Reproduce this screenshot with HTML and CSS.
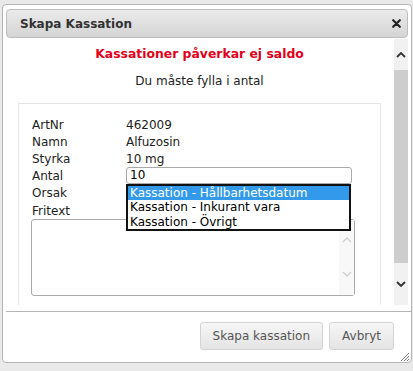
FILE: index.html
```html
<!DOCTYPE html>
<html lang="sv">
<head>
    <meta charset="UTF-8">
    <meta name="viewport" content="width=device-width, initial-scale=1.0">
    <title>Skapa Kassation</title>
    <link rel="stylesheet" href="styles.css">
</head>
<body>
    <div class="dialog">
        <div class="titlebar">
            <span class="title">Skapa Kassation</span>
            <svg class="close" width="9" height="9" viewBox="0 0 9 9">
                <path d="M1.2 1.2 L7.8 7.8 M7.8 1.2 L1.2 7.8" stroke="#222" stroke-width="2.2" stroke-linecap="round"/>
            </svg>
        </div>
        <div class="content">
            <div class="main">
                <p class="warning">Kassationer påverkar ej saldo</p>
                <p class="notice">Du måste fylla i antal</p>
                <div class="box">
                    <div class="form">
                        <span>ArtNr</span><span>462009</span>
                        <span>Namn</span><span>Alfuzosin</span>
                        <span>Styrka</span><span>10 mg</span>
                        <span>Antal</span><span class="input">10</span>
                        <span>Orsak</span>
                        <span class="select">
                            <span class="list">
                                <span class="option selected">Kassation - Hållbarhetsdatum</span>
                                <span class="option">Kassation - Inkurant vara</span>
                                <span class="option">Kassation - Övrigt</span>
                            </span>
                        </span>
                        <span>Fritext</span><span></span>
                    </div>
                    <div class="textarea">
                        <div class="ta-scroll">
                            <svg width="10" height="6" viewBox="0 0 10 6"><path d="M1 5 L5 1 L9 5" fill="none" stroke="#cfcfcf" stroke-width="1.3"/></svg>
                            <svg width="10" height="6" viewBox="0 0 10 6"><path d="M1 1 L5 5 L9 1" fill="none" stroke="#cfcfcf" stroke-width="1.3"/></svg>
                        </div>
                    </div>
                </div>
            </div>
            <div class="scrollbar">
                <div class="sb-btn up">
                    <svg width="10" height="6" viewBox="0 0 10 6"><path d="M1 5 L5 1 L9 5" fill="none" stroke="#333" stroke-width="1.8"/></svg>
                </div>
                <div class="sb-thumb"></div>
                <div class="sb-btn down">
                    <svg width="10" height="6" viewBox="0 0 10 6"><path d="M1 1 L5 5 L9 1" fill="none" stroke="#333" stroke-width="1.8"/></svg>
                </div>
            </div>
        </div>
        <div class="buttonpane">
            <button>Skapa kassation</button>
            <button>Avbryt</button>
            <svg class="grip" width="10" height="9" viewBox="0 0 10 9">
                <path d="M9 1 L1 9 M9 4 L4 9 M9 7 L7 9" stroke="#777" stroke-width="1"/>
            </svg>
        </div>
    </div>
</body>
</html>
```

FILE: styles.css
```css
* {
    margin: 0;
    padding: 0;
    box-sizing: border-box;
}
body {
    font-family: "DejaVu Sans", Verdana, sans-serif;
    font-size: 12px;
    color: #222;
    background: #e9e9e9;
    padding: 4px 0 0 2px;
    width: 413px;
    height: 371px;
    overflow: hidden;
}
.dialog {
    width: 410px;
    height: 359px;
    background: #fff;
    border: 1px solid #b5b5b5;
    border-radius: 4px;
    padding: 4px 3px 3px;
}
.titlebar {
    height: 29px;
    display: flex;
    align-items: center;
    justify-content: space-between;
    padding: 0 6px 0 13px;
    border: 1px solid #bdbdbd;
    border-radius: 4px;
    background: linear-gradient(#ebebeb, #d4d4d4);
}
.title {
    font-weight: bold;
    font-size: 12px;
    color: #333;
}
.content {
    display: flex;
    height: 266px;
    margin-top: 1px;
}
.main {
    flex: 1;
    overflow: hidden;
    padding: 0 13px 0 12px;
}
.warning {
    color: #e2001a;
    font-weight: bold;
    font-size: 12.4px;
    text-align: center;
    margin-top: 7px;
    line-height: 16px;
}
.notice {
    text-align: center;
    margin-top: 11px;
    line-height: 16px;
}
.box {
    border: 1px solid #e6e6e6;
    margin-top: 14px;
    padding: 12px 13px 20px;
}
.form {
    display: grid;
    grid-template-columns: 94px 226px;
    grid-template-rows: 17px 17px 17px 17px 18px 17px;
    align-items: center;
}
.input {
    display: block;
    height: 17px;
    border: 1px solid #aaa;
    border-radius: 3px;
    padding: 0 3px;
    line-height: 15px;
    color: #000;
}
.select {
    position: relative;
    height: 18px;
}
.list {
    position: absolute;
    left: 0;
    top: 0;
    width: 225px;
    border: 2px solid #111;
    background: #fff;
    display: flex;
    flex-direction: column;
    z-index: 2;
}
.option {
    line-height: 14.4px;
    padding-left: 2px;
    color: #000;
}
.option.selected {
    background: #3399ea;
    color: #fff;
}
.textarea {
    position: relative;
    height: 77px;
    width: 324px;
    margin-left: -1px;
    border: 1px solid #aaa;
    border-radius: 3px;
}
.ta-scroll {
    position: absolute;
    right: 0;
    top: 0;
    bottom: 0;
    width: 15px;
    background: #f8f8f8;
    display: flex;
    flex-direction: column;
    justify-content: space-between;
    align-items: center;
    padding: 17px 0 18px;
}
.scrollbar {
    width: 14px;
    display: flex;
    flex-direction: column;
    background: #f1f1f1;
}
.sb-btn {
    display: flex;
    justify-content: center;
    align-items: center;
}
.sb-btn.up {
    height: 31px;
}
.sb-btn.down {
    height: 42px;
}
.sb-thumb {
    flex: 1;
    background: #cdcdcd;
}
.buttonpane {
    border-top: 1px solid #b5b5b5;
    margin: 6px -3px 0 0;
    padding: 10px 17px 0 0;
    display: flex;
    justify-content: flex-end;
    gap: 6px;
    position: relative;
    height: 51px;
}
button {
    font-family: inherit;
    font-size: 12px;
    color: #555;
    height: 28px;
    padding: 0 12px;
    border: 1px solid #d3d3d3;
    border-radius: 3px;
    background: linear-gradient(#f6f6f6, #e4e4e4);
}
.grip {
    position: absolute;
    right: 1px;
    bottom: 1px;
}
```
